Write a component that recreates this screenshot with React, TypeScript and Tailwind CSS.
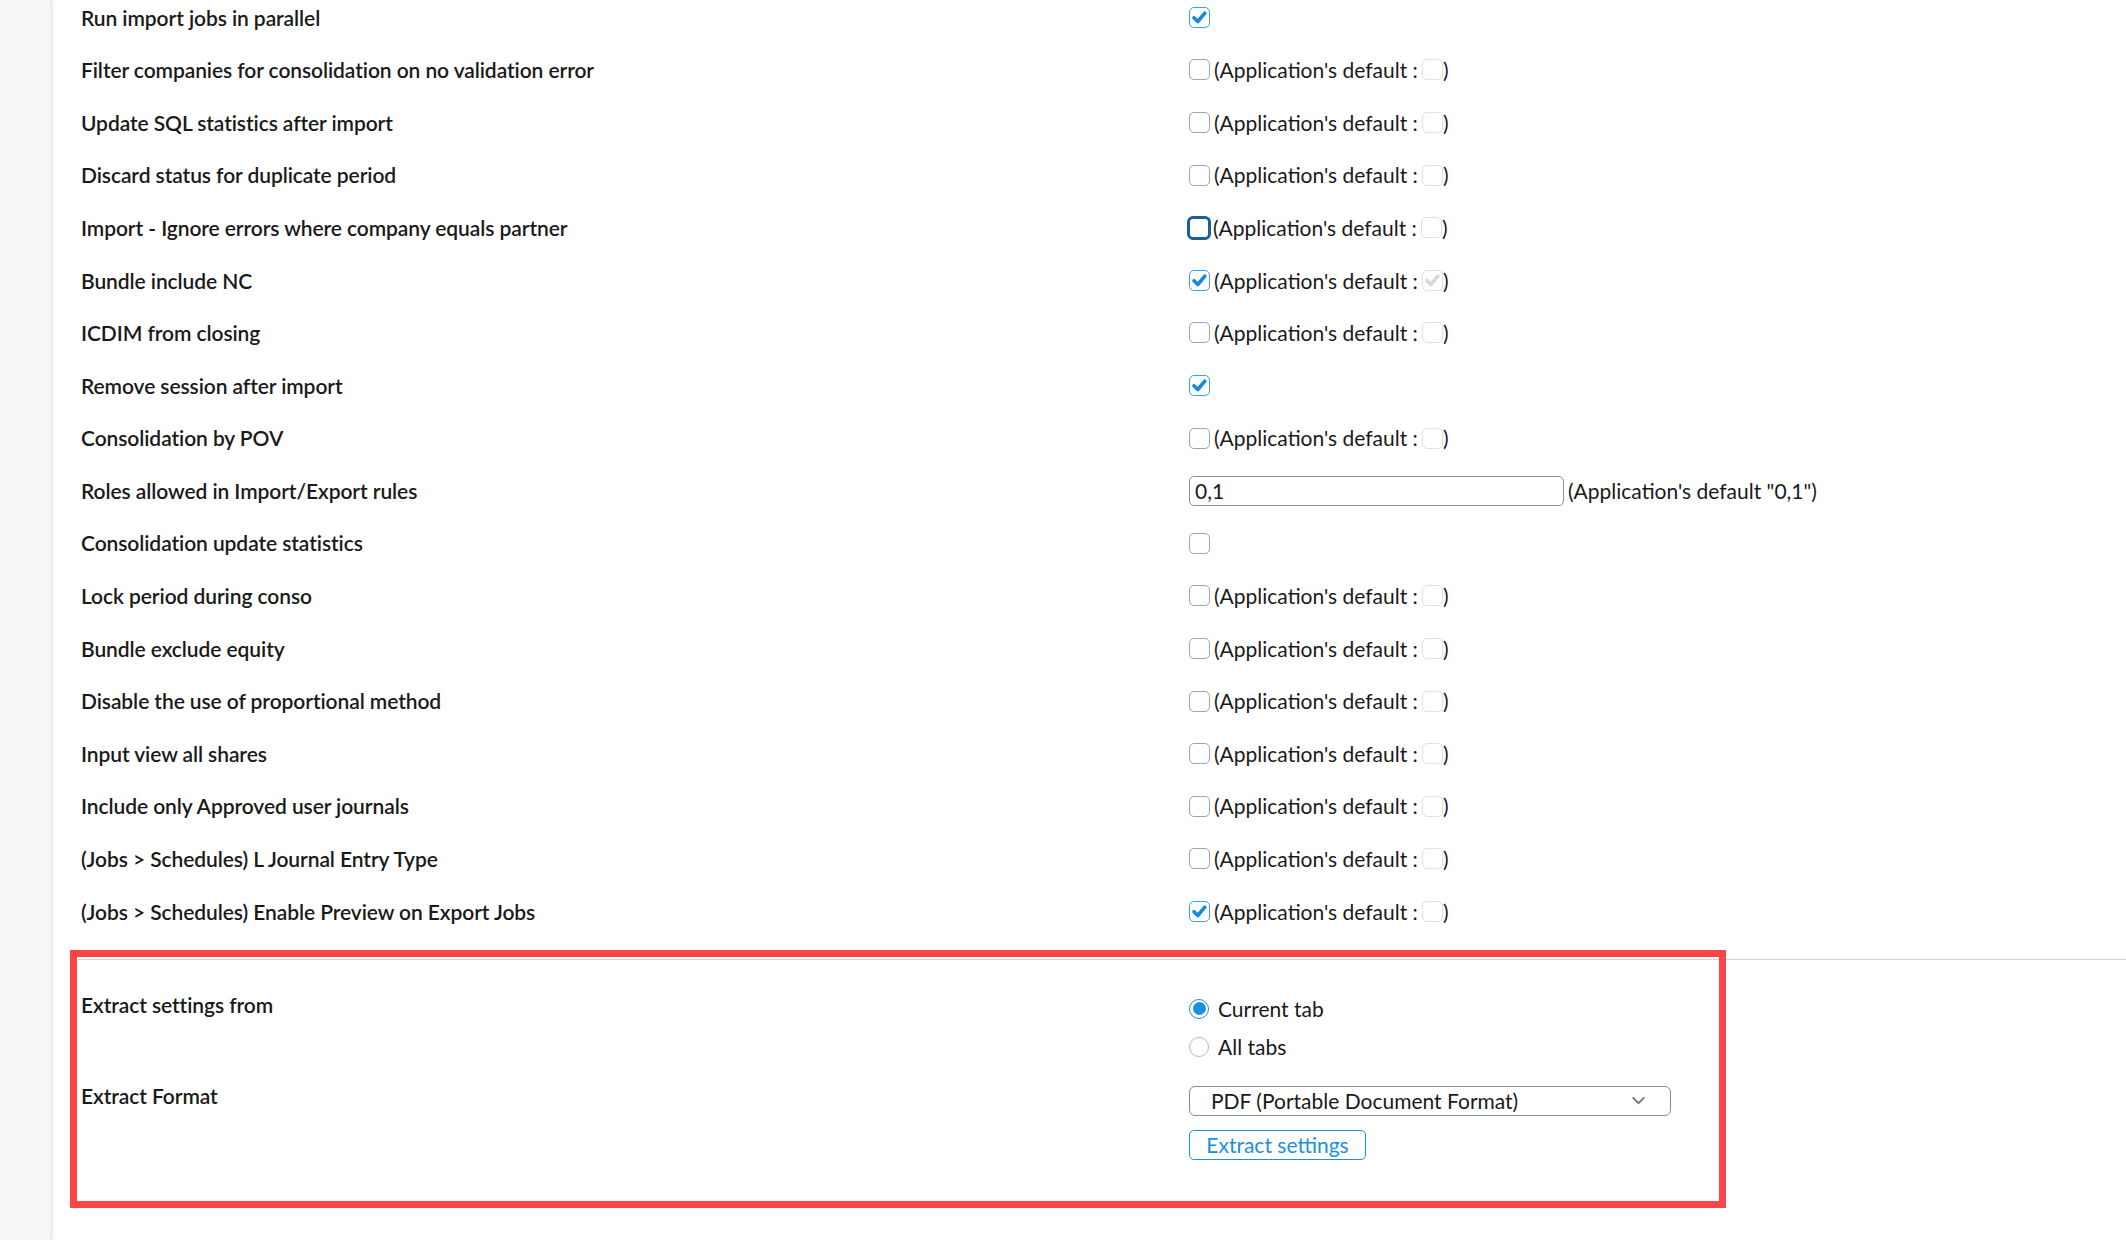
import React from 'react'

type BoxKind = 'on' | 'off' | 'focus' | 'def' | 'defOn'

interface Setting {
  label: string
  value: BoxKind | 'input'
  def?: BoxKind | null
}

const settings: Setting[] = [
  { label: 'Run import jobs in parallel', value: 'on', def: null },
  { label: 'Filter companies for consolidation on no validation error', value: 'off', def: 'def' },
  { label: 'Update SQL statistics after import', value: 'off', def: 'def' },
  { label: 'Discard status for duplicate period', value: 'off', def: 'def' },
  { label: 'Import - Ignore errors where company equals partner', value: 'focus', def: 'def' },
  { label: 'Bundle include NC', value: 'on', def: 'defOn' },
  { label: 'ICDIM from closing', value: 'off', def: 'def' },
  { label: 'Remove session after import', value: 'on', def: null },
  { label: 'Consolidation by POV', value: 'off', def: 'def' },
  { label: 'Roles allowed in Import/Export rules', value: 'input' },
  { label: 'Consolidation update statistics', value: 'off', def: null },
  { label: 'Lock period during conso', value: 'off', def: 'def' },
  { label: 'Bundle exclude equity', value: 'off', def: 'def' },
  { label: 'Disable the use of proportional method', value: 'off', def: 'def' },
  { label: 'Input view all shares', value: 'off', def: 'def' },
  { label: 'Include only Approved user journals', value: 'off', def: 'def' },
  { label: '(Jobs > Schedules) L Journal Entry Type', value: 'off', def: 'def' },
  { label: '(Jobs > Schedules) Enable Preview on Export Jobs', value: 'on', def: 'def' },
]

function Check({ color }: { color: string }) {
  return (
    <svg viewBox="0 0 20 20" className="w-full h-full">
      <path d="M4.2 10.2 L8.2 14.2 L15.6 5.4" fill="none" stroke={color} strokeWidth="3.8" strokeLinecap="round" strokeLinejoin="round" />
    </svg>
  )
}

function Box({ kind }: { kind: BoxKind }) {
  if (kind === 'focus') {
    return <span className="block w-[24px] h-[24px] -mx-[2px] rounded-[6px] border-[3px] border-[#1c5f94] bg-white shrink-0" />
  }
  if (kind === 'on') {
    return (
      <span className="block w-[21px] h-[21px] rounded-[5px] border-[1.5px] border-[#3aa0ea] bg-white shrink-0">
        <Check color="#168ade" />
      </span>
    )
  }
  if (kind === 'defOn') {
    return (
      <span className="block w-[21px] h-[21px] rounded-[5px] border-[1.5px] border-[#dde1e7] bg-white shrink-0">
        <Check color="#d2d7de" />
      </span>
    )
  }
  if (kind === 'def') {
    return <span className="block w-[21px] h-[21px] rounded-[5px] border-[1.5px] border-[#dde1e7] bg-white shrink-0" />
  }
  return <span className="block w-[21px] h-[21px] rounded-[5px] border-[1.5px] border-[#9ea5b1] bg-white shrink-0" />
}

function Radio({ checked }: { checked?: boolean }) {
  return checked ? (
    <span className="flex items-center justify-center w-[20px] h-[20px] rounded-full border-[1.5px] border-[#1c8fe0] bg-white shrink-0">
      <span className="block w-[13px] h-[13px] rounded-full bg-[#1c8fe0]" />
    </span>
  ) : (
    <span className="block w-[20px] h-[20px] rounded-full border-[1.5px] border-[#b3b8c1] bg-white shrink-0" />
  )
}

export default function App() {
  return (
    <div className="relative flex w-full h-[1240px] overflow-hidden bg-white text-[#1a1a1a] font-['Lato','Liberation_Sans',sans-serif]">
      <aside className="w-[52px] shrink-0 bg-[#f5f6f8] border-r border-[#e6e7ea] shadow-[2px_0_4px_rgba(0,0,0,0.05)]" />

      <main className="flex-1">
        <div className="-mt-[9px] pl-[29px]">
          {settings.map((s) => (
            <div key={s.label} className="grid grid-cols-[1108px_1fr] items-center h-[52.6px]">
              <div className="text-[21px] font-semibold tracking-[-0.004em]">{s.label}</div>
              <div className="flex items-center text-[21px]">
                {s.value === 'input' ? (
                  <>
                    <div className="w-[375px] h-[30px] flex items-center rounded-[5px] border border-[#8c919b] pl-[5px] leading-none">0,1</div>
                    <span className="ml-[4px]">(Application's default "0,1")</span>
                  </>
                ) : (
                  <>
                    <Box kind={s.value} />
                    {s.def && (
                      <>
                        <span className="ml-[4px]">(Application's default :</span>
                        <span className="ml-[4px]">
                          <Box kind={s.def} />
                        </span>
                        <span>)</span>
                      </>
                    )}
                  </>
                )}
              </div>
            </div>
          ))}
        </div>

        <div className="mt-[21px] ml-[26px] border-t border-[#d3d3d3]" />

        <div className="pl-[29px] pt-[30px]">
          <div className="grid grid-cols-[1108px_1fr] items-start">
            <div className="text-[21px] font-semibold leading-[30px] tracking-[-0.004em]">Extract settings from</div>
            <div className="flex flex-col text-[21px]">
              <label className="flex items-center h-[38px]">
                <Radio checked />
                <span className="ml-[9px]">Current tab</span>
              </label>
              <label className="flex items-center h-[38px]">
                <Radio />
                <span className="ml-[9px]">All tabs</span>
              </label>
            </div>
          </div>

          <div className="grid grid-cols-[1108px_1fr] items-start mt-[20px]">
            <div className="text-[21px] font-semibold leading-[20px] tracking-[-0.004em]">Extract Format</div>
            <div className="flex flex-col items-start">
              <div className="w-[482px] h-[30px] flex items-center justify-between rounded-[6px] border border-[#868c98] pl-[21px] pr-[24px] text-[21px]">
                <span>PDF (Portable Document Format)</span>
                <svg viewBox="0 0 16 10" className="w-[15px] h-[9px]">
                  <path d="M1.5 1.5 L8 8 L14.5 1.5" fill="none" stroke="#6f7584" strokeWidth="2" />
                </svg>
              </div>
              <button className="mt-[14px] w-[177px] h-[30px] rounded-[5px] border border-[#1b8fe0] text-[21px] text-[#1b8fe0] bg-white leading-none">
                Extract settings
              </button>
            </div>
          </div>
        </div>
      </main>

      <div className="absolute left-[70px] top-[950px] w-[1656px] h-[258px] border-[7px] border-[#fd4545] pointer-events-none" />
    </div>
  )
}
